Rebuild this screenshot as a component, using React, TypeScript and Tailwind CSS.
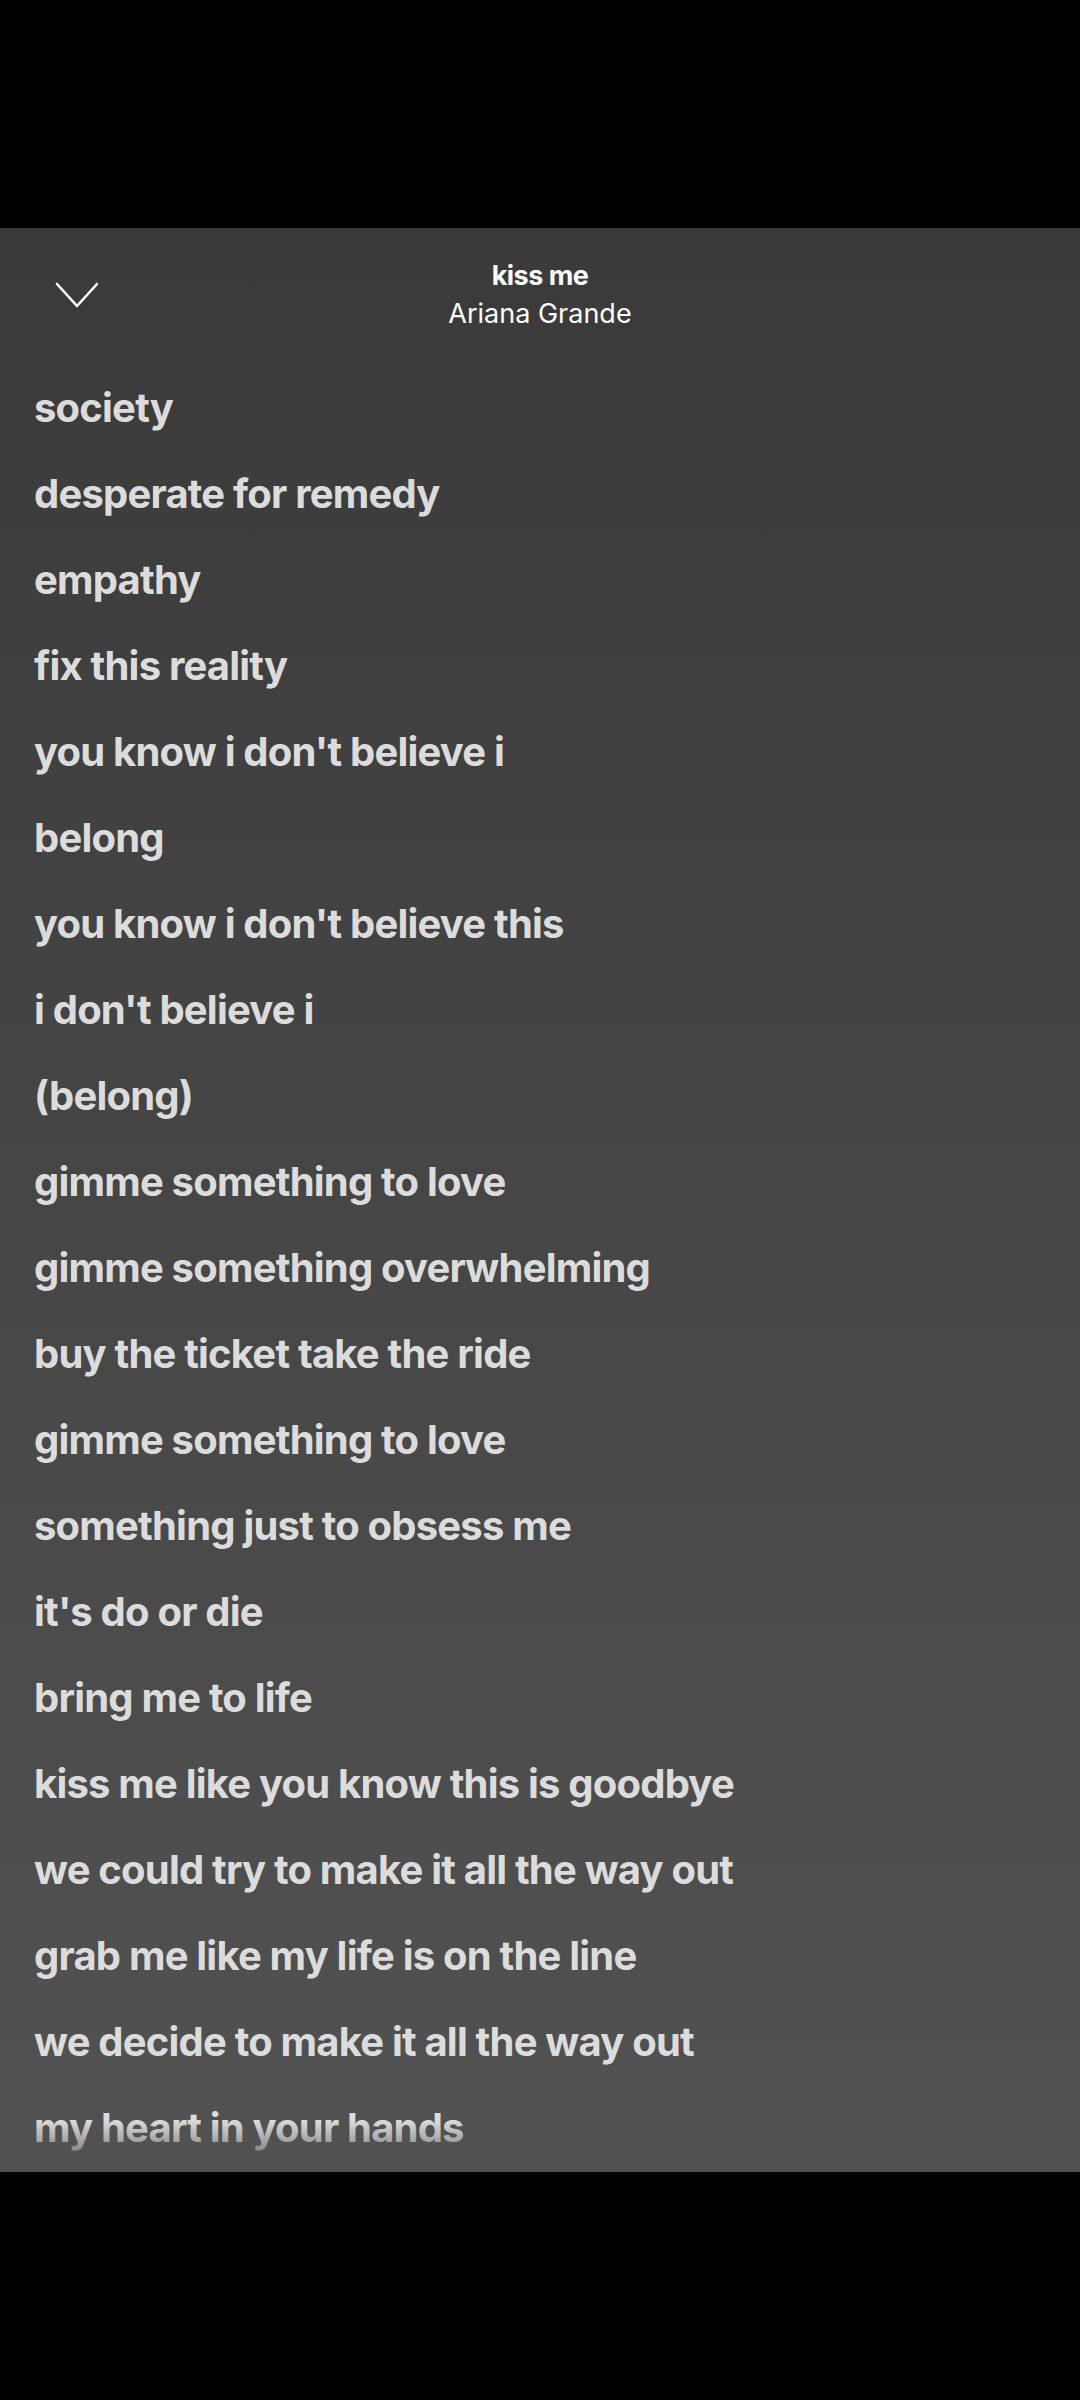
const lines = [
  "society",
  "desperate for remedy",
  "empathy",
  "fix this reality",
  "you know i don't believe i",
  "belong",
  "you know i don't believe this",
  "i don't believe i",
  "(belong)",
  "gimme something to love",
  "gimme something overwhelming",
  "buy the ticket take the ride",
  "gimme something to love",
  "something just to obsess me",
  "it's do or die",
  "bring me to life",
  "kiss me like you know this is goodbye",
  "we could try to make it all the way out",
  "grab me like my life is on the line",
  "we decide to make it all the way out",
  "my heart in your hands",
];

function Chevron() {
  return (
    <svg width="44" height="28" viewBox="0 0 44 28" fill="none">
      <polyline
        points="2,3 22,25 42,3"
        stroke="white"
        strokeWidth="2.6"
        strokeLinecap="round"
        strokeLinejoin="round"
      />
    </svg>
  );
}

export default function App() {
  return (
    <div className="flex h-[2400px] w-[1080px] flex-col bg-black font-['Inter','Liberation_Sans',sans-serif]">
      <div className="h-[228px] shrink-0" />

      <main className="relative h-[1944px] shrink-0 overflow-hidden bg-gradient-to-b from-[#3a3a3a] to-[#525252]">
        <header className="relative flex h-[137px] items-start">
          <button className="absolute left-[55px] top-[53px]">
            <Chevron />
          </button>
          <div className="flex w-full flex-col items-center pt-[32px]">
            <span className="text-[27px] font-bold leading-[32px] tracking-[-0.02em] text-white">kiss me</span>
            <span className="mt-[5px] text-[27px] leading-[34px] text-white">Ariana Grande</span>
          </div>
        </header>

        <div className="flex flex-col px-[34px]">
          {lines.map((line, i) => (
            <p
              key={i}
              className="h-[86px] text-[40px] font-bold leading-[86px] tracking-[-0.02em] text-[#dcdcdc]"
            >
              {line}
            </p>
          ))}
        </div>

        <div className="absolute inset-x-0 bottom-0 h-[52px] bg-gradient-to-b from-[#52525200] to-[#525252]" />
      </main>

      <div className="flex-1" />
    </div>
  );
}
